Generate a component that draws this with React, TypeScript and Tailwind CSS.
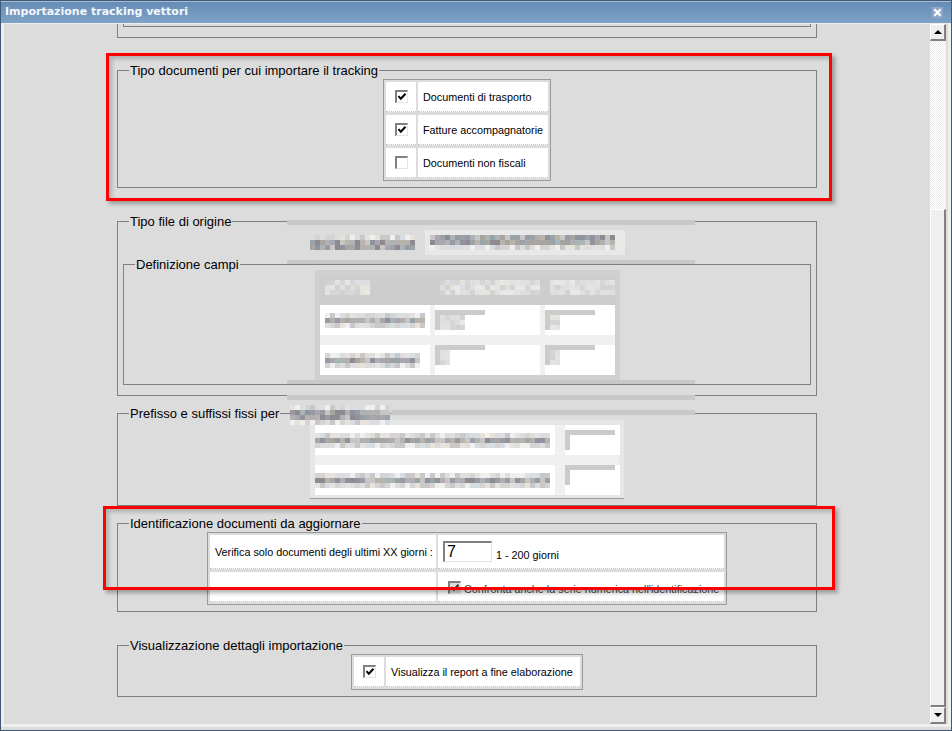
import type { ReactNode } from 'react';

const tints = ['#c9c5c4', '#a9a6b0', '#9a9aa5', '#b8b4ac', '#8f939e', '#a8a4a0', '#9aa3a8', '#b3aeb0', '#aab3b5', '#8d8a92'];
const lightTints = ['#d6d6d6', '#e0e0e0', '#dcdfe2', '#e6e2de', '#d2d2d2', '#e8e8e8'];
const paleTints = ['#dedede', '#d4d4d4', '#e8e2dc', '#d8dde2', '#efefef', '#c8c8c8'];

// pixelated area, the source image hides this text
function Mosaic({ cols, rows, seed, palette = tints, dark, className = '' }: { cols: number; rows: number; seed: number; palette?: string[]; dark?: number[]; className?: string }) {
  let n = seed;
  const darkRows = dark ?? [Math.floor(rows / 2)];
  const cells = Array.from({ length: cols * rows }, (_, i) => {
    n = (n * 73 + 41) % 1009;
    const row = Math.floor(i / cols);
    const list = palette === tints && !darkRows.includes(row) ? paleTints : palette;
    return list[n % list.length];
  });
  return (
    <div className={`flex flex-wrap ${className}`} style={{ width: cols * 5, height: rows * 5 }}>
      {cells.map((color, i) => (
        <div key={i} className="w-[5px] h-[5px]" style={{ backgroundColor: color }} />
      ))}
    </div>
  );
}

function Group({ title, className = '', children }: { title: string; className?: string; children?: ReactNode }) {
  return (
    <fieldset className={`relative border border-[#808080] ${className}`}>
      <legend className="ml-[11px] px-[1px] text-[13px] leading-[14px] text-black whitespace-nowrap">
        <span className="relative top-[1px]">{title}</span>
      </legend>
      {children}
    </fieldset>
  );
}

function Check({ checked, disabled = false }: { checked: boolean; disabled?: boolean }) {
  return (
    <span className={`block w-[13px] h-[13px] shrink-0 border-t-2 border-l-2 border-t-[#808080] border-l-[#808080] border-r border-b border-r-[#e4e4e4] border-b-[#e4e4e4] ${disabled ? 'bg-[#dcdcdc]' : 'bg-white'}`}>
      {checked && (
        <svg viewBox="0 0 10 10" className="w-[10px] h-[10px]">
          <path d="M1.5 4.2 L3.8 6.8 L8.5 1.8" fill="none" stroke={disabled ? '#333' : '#000'} strokeWidth="2" />
        </svg>
      )}
    </span>
  );
}

function CheckRow({ label, checked }: { label: string; checked: boolean }) {
  return (
    <>
      <div className="bg-white border-b border-dotted border-[#c4c4c4] flex items-center justify-center">
        <Check checked={checked} />
      </div>
      <div className="bg-white border-b border-dotted border-[#c4c4c4] flex items-center pl-[5px] pt-[2px] text-[10.8px] text-black whitespace-nowrap">{label}</div>
    </>
  );
}

function BlurInput({ seed, cols = 2 }: { seed: number; cols?: number }) {
  return (
    <div className="w-[50px] h-[20px] border-t-[5px] border-l-[5px] border-t-[#cbcbcb] border-l-[#cbcbcb] bg-white">
      <Mosaic cols={cols} rows={3} seed={seed} palette={lightTints} />
    </div>
  );
}

function Arrow({ up }: { up: boolean }) {
  return (
    <svg viewBox="0 0 8 4" className="w-[8px] h-[4px]">
      <polygon points={up ? '4,0 8,4 0,4' : '0,0 8,0 4,4'} fill="#000" />
    </svg>
  );
}

function ScrollButton({ up }: { up: boolean }) {
  return (
    <div className="h-[17px] bg-[#efefef] border-r-2 border-b-2 border-r-[#808080] border-b-[#808080] border-t border-l border-t-white border-l-white flex items-center justify-center">
      <Arrow up={up} />
    </div>
  );
}

export default function App() {
  return (
    <div className="relative w-[952px] h-[731px] overflow-hidden bg-[#dcdcdc] border border-[#3f5a78] font-['Liberation_Sans',Arial,sans-serif]">
      <div className="h-[22px] bg-gradient-to-b from-[#668cb6] to-[#7fa2c7] flex items-center justify-between pl-[4px] pr-[8px] border-t border-[#a9bdd3]">
        <span className="font-['DejaVu_Sans',sans-serif] font-bold text-[11px] text-[#f4f8fc]">Importazione tracking vettori</span>
        <span className="w-[11px] h-[11px] bg-[#8aa9cb] flex items-center justify-center">
          <svg viewBox="0 0 10 10" className="w-[9px] h-[9px]">
            <path d="M1.5 1.5 L8.5 8.5 M8.5 1.5 L1.5 8.5" stroke="#fff" strokeWidth="2.4" />
          </svg>
        </span>
      </div>

      <div className="flex h-[704px] border-x-[3px] border-b-[3px] border-t border-[#eeeeee]">
        <div className="w-[926px] px-[113px]">
          <div className="h-[14px] border-x border-b border-[#808080]">
            <div className="h-[3px] mx-[5px] border-x border-b border-[#808080]" />
          </div>

          <Group title="Tipo documenti per cui importare il tracking" className="mt-[25px] h-[125px]">
            <div className="flex justify-center pt-[2px]">
              <div className="grid grid-cols-[30px_130px] auto-rows-[30px] gap-x-[2px] gap-y-[3px] p-[2px] border border-[#999999] bg-[#dcdcdc]">
                <CheckRow label="Documenti di trasporto" checked />
                <CheckRow label="Fatture accompagnatorie" checked />
                <CheckRow label="Documenti non fiscali" checked={false} />
              </div>
            </div>
          </Group>

          <Group title="Tipo file di origine" className="mt-[26px] h-[182px]">
            <div className="absolute left-[169px] -top-[8px] w-[408px] h-[5px] bg-[#c8c8c8]" />
            <div className="absolute left-[169px] top-[32px] w-[408px] h-[5px] bg-[#c8c8c8]" />
            <div className="absolute left-[169px] top-[152px] w-[408px] h-[5px] bg-[#c8c8c8]" />
            <div className="absolute left-[169px] top-[167px] w-[408px] h-[5px] bg-[#c8c8c8]" />

            <div className="flex h-[25px] mt-[2px] pl-[192px] items-center gap-[10px]">
              <Mosaic cols={21} rows={3} seed={17} dark={[1, 2]} />
              <div className="w-[200px] h-[25px] bg-[#e8e8e8] pt-[5px] pl-[5px]">
                <Mosaic cols={37} rows={3} seed={29} dark={[0, 1]} />
              </div>
            </div>

            <Group title="Definizione campi" className="mt-[2px] mx-[5px] h-[128px]">
              <div className="flex justify-center -mt-px">
                <div className="w-[305px] h-[110px] bg-[#d0d0d0] p-[5px]">
                  <div className="grid grid-cols-[110px_105px_70px] gap-x-[5px] h-[30px] bg-[#cdcdcd] pt-[5px] pl-[5px]">
                    <Mosaic cols={9} rows={3} seed={5} palette={lightTints} />
                    <Mosaic cols={20} rows={3} seed={11} palette={lightTints} />
                    <Mosaic cols={13} rows={3} seed={23} palette={lightTints} />
                  </div>
                  <div className="grid grid-cols-[110px_105px_70px] grid-rows-[30px_30px] gap-x-[5px] gap-y-[10px] bg-[#f0f0f0]">
                    <div className="bg-white flex items-center pl-[5px]"><Mosaic cols={20} rows={3} seed={37} /></div>
                    <div className="bg-white pt-[5px]"><BlurInput seed={41} cols={5} /></div>
                    <div className="bg-white pt-[5px]"><BlurInput seed={43} /></div>
                    <div className="bg-white flex items-center pl-[5px]"><Mosaic cols={19} rows={3} seed={47} /></div>
                    <div className="bg-white"><BlurInput seed={53} /></div>
                    <div className="bg-white"><BlurInput seed={59} /></div>
                  </div>
                </div>
              </div>
            </Group>
          </Group>

          <Group title="Prefisso e suffissi fissi per" className="mt-[10px] h-[100px]">
            <div className="absolute left-[273px] -top-[10px] w-[304px] h-[5px] bg-[#c8c8c8]" />
            <Mosaic cols={20} rows={4} seed={61} dark={[1, 2]} className="absolute left-[172px] -top-[15px]" />
            <div className="flex justify-center">
              <div className="w-[314px] h-[79px] bg-[#e6e6e6] border-b border-[#999999] px-[5px] pt-[5px]">
                <div className="grid grid-cols-[240px_55px] grid-rows-[30px_30px] gap-x-[10px] gap-y-[10px] bg-[#f0f0f0]">
                  <div className="bg-white flex items-center pr-[5px]"><Mosaic cols={47} rows={3} seed={67} /></div>
                  <div className="bg-white pt-[5px]"><BlurInput seed={71} cols={0} /></div>
                  <div className="bg-white flex items-center pr-[5px]"><Mosaic cols={47} rows={3} seed={73} /></div>
                  <div className="bg-white"><BlurInput seed={79} cols={0} /></div>
                </div>
              </div>
            </div>
          </Group>

          <Group title="Identificazione documenti da aggiornare" className="mt-[10px] h-[96px]">
            <div className="flex justify-center pt-[2px]">
              <div className="grid grid-cols-[226px_286px] grid-rows-[34px_30px] gap-x-[2px] gap-y-[3px] p-[2px] border border-[#999999] bg-[#dcdcdc] text-[10.8px] text-black whitespace-nowrap">
                <div className="bg-white border-b border-dotted border-[#c4c4c4] flex items-center pl-[5px] pt-[2px]">Verifica solo documenti degli ultimi XX giorni :</div>
                <div className="bg-white border-b border-dotted border-[#c4c4c4] flex items-center pl-[5px] gap-[4px]">
                  <span className="block w-[49px] h-[21px] border-t-2 border-l-2 border-t-[#808080] border-l-[#808080] border-r border-b border-r-[#e4e4e4] border-b-[#e4e4e4] text-[16px] leading-[18px] pl-[2px]">7</span>
                  <span className="mt-[7px]">1 - 200 giorni</span>
                </div>
                <div className="bg-white border-b border-dotted border-[#c4c4c4]" />
                <div className="bg-white border-b border-dotted border-[#c4c4c4] flex items-center pl-[10px] gap-[3px] text-[#444444]">
                  <span className="mt-[1px]"><Check checked disabled /></span>
                  <span className="mt-[6px]">Confronta anche la serie numerica nell'identificazione</span>
                </div>
              </div>
            </div>
          </Group>

          <Group title="Visualizzazione dettagli importazione" className="mt-[26px] h-[59px]">
            <div className="flex justify-center pt-[2px]">
              <div className="grid grid-cols-[30px_194px] auto-rows-[30px] gap-x-[2px] p-[2px] border border-[#999999] bg-[#dcdcdc]">
                <CheckRow label="Visualizza il report a fine elaborazione" checked />
              </div>
            </div>
          </Group>
        </div>

        <div className="w-[16px] flex flex-col bg-[#f6f6f6] bg-[repeating-conic-gradient(#ffffff_0_25%,#ececec_0_50%)] bg-[length:2px_2px]">
          <ScrollButton up />
          <div className="h-[168px]" />
          <div className="flex-1 bg-[#efefef] border-r-2 border-b-2 border-r-[#808080] border-b-[#808080] border-t border-l border-t-white border-l-white" />
          <ScrollButton up={false} />
        </div>
      </div>

      <div className="absolute left-[105px] top-[52px] w-[726px] h-[148px] border-[3px] border-[#ff0000] shadow-[3px_3px_4px_rgba(0,0,0,0.3),inset_3px_3px_4px_rgba(0,0,0,0.2)]" />
      <div className="absolute left-[102px] top-[505px] w-[732px] h-[84px] border-[3px] border-[#ff0000] shadow-[3px_3px_4px_rgba(0,0,0,0.3),inset_3px_3px_4px_rgba(0,0,0,0.2)]" />
    </div>
  );
}
